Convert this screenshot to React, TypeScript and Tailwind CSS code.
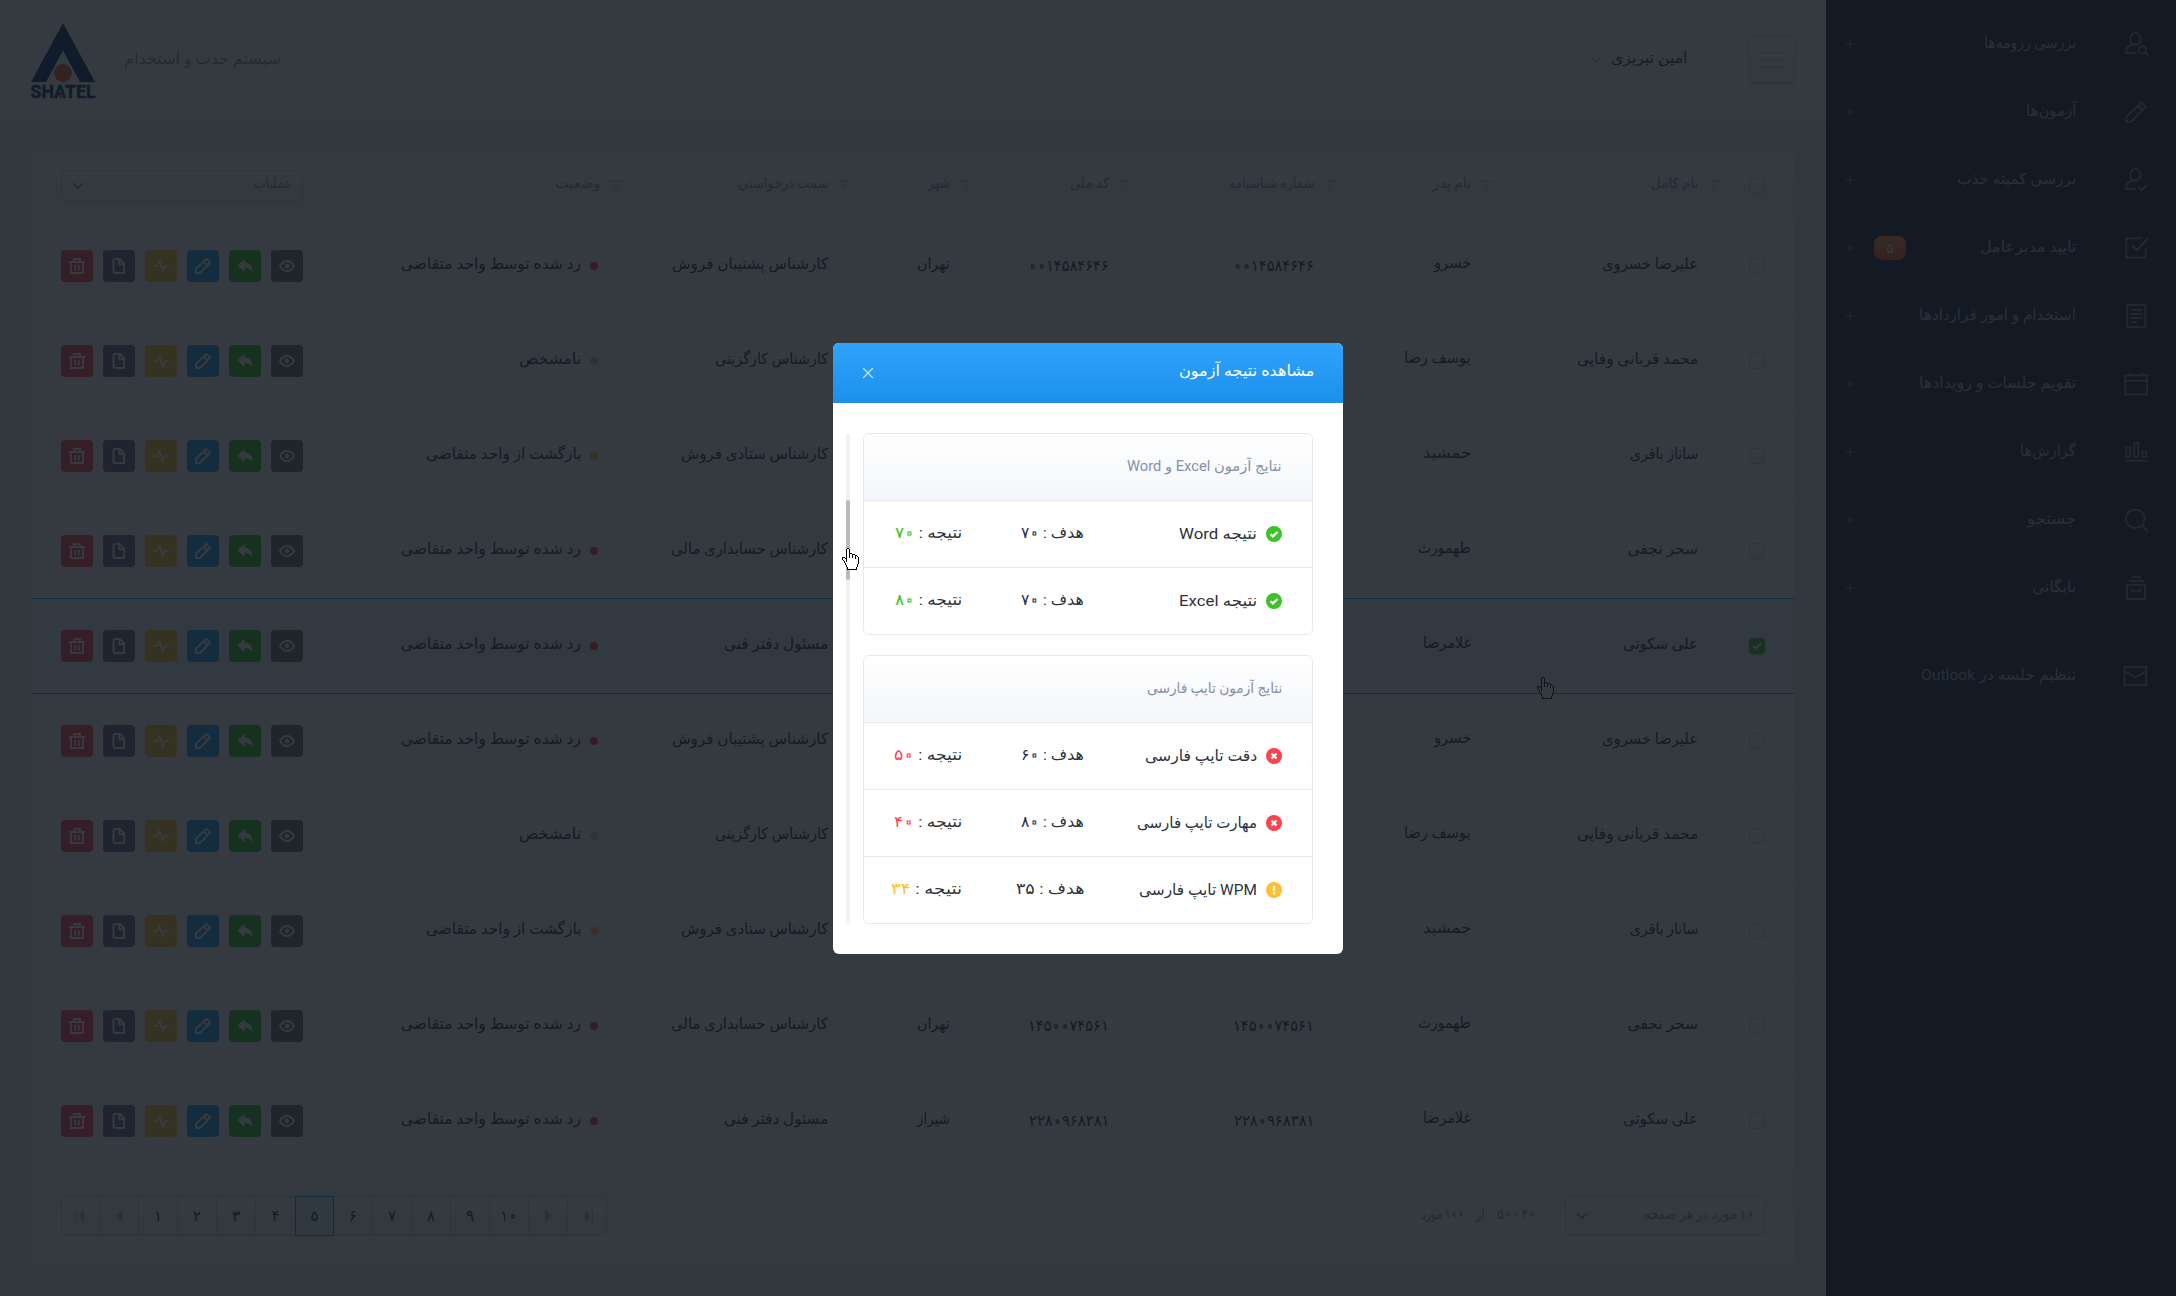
import { useLayoutEffect, useRef, useState, type ReactNode } from "react";

/* Persian text whose zeros are drawn as small open rings. */
function digits(text: string): ReactNode {
  return text.split(/(۰)/).map((part, i) =>
    part === "۰" ? (
      <span
        key={i}
        className="relative top-[0.1em] -mx-[0.07em] text-[1.55em] leading-[0] [-webkit-text-fill-color:transparent] [-webkit-text-stroke:1px_currentColor]"
      >
        ۰
      </span>
    ) : (
      part
    ),
  );
}

/* Single-line label whose glyphs are condensed horizontally to an exact width. */
function Fit({ w, children, className = "" }: { w: number; children: ReactNode; className?: string }) {
  const ref = useRef<HTMLSpanElement>(null);
  const [scale, setScale] = useState(1);
  useLayoutEffect(() => {
    if (ref.current) setScale(w / ref.current.offsetWidth);
  }, [w]);
  return (
    <span dir="rtl" className={`flex shrink-0 justify-start ${className}`} style={{ width: w }}>
      <span
        ref={ref}
        className="block shrink-0 origin-right whitespace-nowrap"
        style={{ transform: `scaleX(${scale})` }}
      >
        {children}
      </span>
    </span>
  );
}

const HAND = [
  ".....##..........",
  "....#oo#.........",
  "....#oo#.........",
  "....#oo#.........",
  "....#oo#.........",
  "....#oo###.......",
  "....#oo#oo###....",
  "....#oo#oo#oo##..",
  "....#oo#oo#oo#o#.",
  "###.#oo#oo#oo#oo#",
  "#oo##oooooooo#oo#",
  "#ooo#ooooooooooo#",
  ".#oo#ooooooooooo#",
  "..#o#ooooooooooo#",
  "..#ooooooooooooo#",
  "...#oooooooooooo#",
  "...#ooooooooooo#.",
  "....#oooooooooo#.",
  "....#oooooooooo#.",
  ".....#oooooooo#..",
  ".....#oooooooo#..",
  ".....##########..",
];

function HandCursor() {
  return (
    <svg width="17" height="22" viewBox="0 0 17 22" shapeRendering="crispEdges">
      {HAND.flatMap((row, y) =>
        row.split("").map((c, x) =>
          c === "." ? null : <rect key={`${x}-${y}`} x={x} y={y} width="1" height="1" fill={c === "#" ? "#000" : "#fff"} />,
        ),
      )}
    </svg>
  );
}

const icons: Record<string, ReactNode> = {
  userSearch: (
    <>
      <ellipse cx="11.3" cy="7" rx="5.2" ry="6" />
      <path d="M13 21H2.3v-2.6c0-3 2.200-4.300 6.200-5.600" />
      <circle cx="18.4" cy="17.8" r="3.6" />
      <path d="M21 20.400l3 3" />
    </>
  ),
  pencil: <path d="M2.3 21.7v-4.9L17.4 2.2l4.4 4.4L7 21.7zM13.8 5.8l4.4 4.4" />,
  userCheck: (
    <>
      <ellipse cx="11.3" cy="7" rx="5.2" ry="6" />
      <path d="M12 21H2.3v-2.6c0-3 2.200-4.300 6.200-5.600M14.500 19.300l3 3 5.600-5.600" />
    </>
  ),
  checkSquare: <path d="M17 2.3H2.3v19.4h19.4V12M8 9.3l5 5L24 2.3" />,
  doc: (
    <>
      <rect x="3.3" y="1" width="18" height="22" rx="1" />
      <path d="M6.5 6h11.8M6.5 10h11.8M6.5 14h11.8M6.5 18H13" />
    </>
  ),
  calendar: <path d="M1.3 3.2h21.6v19.4H1.3zM1.3 8.8h21.6M6.3.3v4.5M18.3.3v4.5" />,
  chart: <path d="M.3 20.8h23.6M2.3 7.8h4v9h-4zM10.3 2.8h4v14h-4zM18.3 11.8h4v5h-4z" />,
  search: (
    <>
      <circle cx="11.3" cy="10.8" r="9.3" />
      <path d="M18 17.6l5.6 5.6" />
    </>
  ),
  archive: <path d="M3 8.8h18v14.2H3zM4.5 5h16M7.5 1h9.5M8.3 12.5v3h8v-3" />,
  mail: <path d="M.3 3h22v18h-22zM.8 7.5l10.5 5.8 10.5-5.8" />,
};

function SideIcon({ name }: { name: string }) {
  return (
    <svg width="24" height="24" viewBox="0 0 24 24" fill="none" stroke="currentColor" strokeWidth="2" className="overflow-visible text-[#7a869a]">
      {icons[name]}
    </svg>
  );
}

const menu: { icon: string; label: string; w: number; badge?: string }[] = [
  { icon: "userSearch", label: "بررسی رزومه‌ها", w: 92 },
  { icon: "pencil", label: "آزمون‌ها", w: 50 },
  { icon: "userCheck", label: "بررسی کمیته جذب", w: 119 },
  { icon: "checkSquare", label: "تایید مدیرعامل", w: 96, badge: "۵" },
  { icon: "doc", label: "استخدام و امور قراردادها", w: 157 },
  { icon: "calendar", label: "تقویم جلسات و رویدادها", w: 157 },
  { icon: "chart", label: "گزارش‌ها", w: 56 },
  { icon: "search", label: "جستجو", w: 49 },
  { icon: "archive", label: "بایگانی", w: 44 },
];

function MenuItem({ icon, label, w, badge, plus = true }: { icon: string; label: string; w: number; badge?: string; plus?: boolean }) {
  return (
    <div className="flex h-[68px] items-center pr-7 pl-5">
      <SideIcon name={icon} />
      <Fit w={w} className="mr-12 -mt-0.5 text-[15.5px] text-[#a9b4c6]">{label}</Fit>
      <div className="grow" />
      {badge && (
        <div className="ml-5 flex h-6 w-8 items-center justify-center rounded-lg bg-linear-to-b from-[#ff9f43] to-[#ff4b2b] text-[14px] text-white">
          {badge}
        </div>
      )}
      {plus && (
        <svg width="8" height="8" viewBox="0 0 8 8" stroke="#6a768a" strokeWidth="1.6">
          <path d="M4 0v8M0 4h8" />
        </svg>
      )}
    </div>
  );
}

function Chevron({ className = "" }: { className?: string }) {
  return (
    <svg width="12" height="8" viewBox="0 0 12 8" fill="none" stroke="currentColor" strokeWidth="2" className={className}>
      <path d="M1 1.200l5 5 5-5" />
    </svg>
  );
}

const actions: { bg: string; icon: ReactNode }[] = [
  {
    bg: "bg-[#75706c]",
    icon: (
      <>
        <path d="M1 8c2-3.400 4.300-5 7-5s5 1.600 7 5c-2 3.400-4.300 5-7 5s-5-1.600-7-5z" />
        <circle cx="8" cy="8" r="1.300" />
      </>
    ),
  },
  { bg: "bg-[#3ac42a]", icon: <path d="M7.600.8v3.800c5 .3 7.700 3.700 8 9.800-1.900-3-4.300-4.300-8-4.300V14L.5 7.500z" fill="currentColor" stroke="none" /> },
  { bg: "bg-[#1e9ff2]", icon: <path d="M1 15v-4.300L11.300.9l3.800 3.800L4.900 15zM8.900 3.700l3.600 3.500" /> },
  { bg: "bg-[#fdc830]", icon: <path d="M0 8h4l2.600-4.800L9.800 13l2-5H16" /> },
  { bg: "bg-[#676d94]", icon: <path d="M3.500 1h5.300l4.400 4.400V15H3.500a1 1 0 0 1-1-1V2a1 1 0 0 1 1-1zM8.300 1.500v4.800h4.500" /> },
  { bg: "bg-[#ff4757]", icon: <path d="M0 4h16M2 4v11h12V4M5 4V1h6v3M6.200 7v5.500M9.800 7v5.500" /> },
];

function Actions() {
  return (
    <div className="flex gap-2.5">
      {actions.map((a, i) => (
        <div key={i} className={`flex size-8 items-center justify-center rounded text-white ${a.bg}`}>
          <svg width="16" height="16" viewBox="0 0 16 16" fill="none" stroke="currentColor" strokeWidth="1.900">
            {a.icon}
          </svg>
        </div>
      ))}
    </div>
  );
}

function Checkbox({ on = false }: { on?: boolean }) {
  return on ? (
    <div className="flex size-4 items-center justify-center rounded bg-[#3ac42a] shadow">
      <svg width="10" height="8" viewBox="0 0 10 8" fill="none" stroke="#fff" strokeWidth="2.200">
        <path d="M1 4l2.700 2.600L9 1.300" />
      </svg>
    </div>
  ) : (
    <div className="size-4 rounded border border-[#c9ced9] bg-linear-to-b from-white to-[#f3f4f8]" />
  );
}

type Cell = [string, number];
const status = {
  red: { dot: "bg-[#ff3b48]", cell: ["رد شده توسط واحد متقاضی", 180] as Cell },
  gray: { dot: "bg-[#c9cdd6]", cell: ["نامشخص", 62] as Cell },
  yellow: { dot: "bg-[#fdc830]", cell: ["بازگشت از واحد متقاضی", 155] as Cell },
};

type Person = { name: Cell; father: Cell; job: Cell; status: keyof typeof status };
const people: Record<string, Person> = {
  a: { name: ["علیرضا خسروی", 96], father: ["خسرو", 37], job: ["کارشناس پشتیبان فروش", 156], status: "red" },
  b: { name: ["محمد قربانی وفایی", 121], father: ["یوسف رضا", 67], job: ["کارشناس کارگزینی", 113], status: "gray" },
  c: { name: ["ساناز باقری", 68], father: ["جمشید", 48], job: ["کارشناس ستادی فروش", 147], status: "yellow" },
  d: { name: ["سحر نجفی", 70], father: ["طهمورث", 53], job: ["کارشناس حسابداری مالی", 157], status: "red" },
  e: { name: ["علی سکوتی", 75], father: ["غلامرضا", 48], job: ["مسئول دفتر فنی", 104], status: "red" },
};

const rows: { who: string; id?: string; city?: string; on?: boolean }[] = [
  { who: "a", id: "۰۰۱۴۵۸۴۶۴۶", city: "تهران" },
  { who: "b" },
  { who: "c" },
  { who: "d" },
  { who: "e", on: true },
  { who: "a" },
  { who: "b" },
  { who: "c" },
  { who: "d", id: "۱۴۵۰۰۷۴۵۶۱", city: "تهران" },
  { who: "e", id: "۲۲۸۰۹۶۸۳۸۱", city: "شیراز" },
];

const GRID = "grid grid-cols-[45px_227px_157px_205px_159px_122px_228px_319px_242px] items-center px-[30px]";

const heads: Cell[] = [
  ["نام کامل", 47],
  ["نام پدر", 38],
  ["شماره شناسنامه", 85],
  ["کد ملی", 39],
  ["شهر", 22],
  ["سمت درخواستی", 90],
  ["وضعیت", 45],
];

function Head({ cell }: { cell: Cell }) {
  return (
    <div className="flex items-center">
      <svg width="12" height="12" viewBox="0 0 12 12" stroke="#d8dbe3" strokeWidth="2">
        <path d="M0 1h12M2.500 5.500h7M4.800 10.500h2.400" />
      </svg>
      <Fit w={cell[1]} className="mr-2.5 -mt-1.5 text-[14px]">{cell[0]}</Fit>
    </div>
  );
}

function Row({ who, id, city, on = false }: { who: string; id?: string; city?: string; on?: boolean }) {
  const p = people[who];
  const s = status[p.status];
  return (
    <div
      className={`${GRID} border-b text-[15.5px] text-[#2b3040] ${
        on ? "-mt-px h-[96px] border-t border-[#1e9ff2] bg-[#e6f5fd]" : "h-[95px] border-[#e9ebf0]"
      }`}
    >
      <Checkbox on={on} />
      <Fit w={p.name[1]} className="-mt-1 mr-[22px]">{p.name[0]}</Fit>
      <Fit w={p.father[1]} className="-mt-1.5 mr-[22px]">{p.father[0]}</Fit>
      <div className="pr-[22px]">{id && <Fit w={81}>{digits(id)}</Fit>}</div>
      <div className="pr-[22px]">{id && <Fit w={81}>{digits(id)}</Fit>}</div>
      <div className="pr-[22px]">{city && <Fit w={33} className="-mt-1">{city}</Fit>}</div>
      <Fit w={p.job[1]} className="-mt-1 mr-[22px]">{p.job[0]}</Fit>
      <div className="flex items-center pr-6">
        <div className={`size-2 rounded-full ${s.dot}`} />
        <Fit w={s.cell[1]} className="-mt-1 mr-[9px]">{s.cell[0]}</Fit>
      </div>
      <Actions />
    </div>
  );
}

const field = "flex items-center rounded border border-[#d3d7e0] bg-linear-to-b from-white to-[#f0f2f6]";

function PageIcon({ d, bar }: { d: string; bar?: number }) {
  return (
    <svg width="10" height="12" viewBox="0 0 10 12" fill="#b4bac8">
      <path d={d} />
      {bar !== undefined && <rect x={bar} y="0" width="1" height="12" />}
    </svg>
  );
}

const pager: ReactNode[] = [
  <PageIcon key="first" d="M8 0v12L2.500 6z" bar={0} />,
  <PageIcon key="prev" d="M8 0v12L2 6z" />,
  "۱", "۲", "۳", "۴", "۵", "۶", "۷", "۸", "۹", "۱۰",
  <PageIcon key="next" d="M2 0v12l6-6z" />,
  <PageIcon key="last" d="M2 0v12l5.500-6z" bar={9} />,
];

function Logo() {
  return (
    <svg width="68" height="80" viewBox="-1 -3 68 80" direction="ltr" className="overflow-visible">
      <path d="M33 0L65 59H50L33 27.500 16 59H1z" fill="#0b3a78" />
      <circle cx="33" cy="50" r="9" fill="#f2602a" />
      <text x="0.500" y="75" textLength="65" lengthAdjust="spacingAndGlyphs" fill="#0b3a78" stroke="#0b3a78" strokeWidth="0.500" className="font-['Roboto'] text-[18px] font-bold">
        SHATEL
      </text>
      <circle cx="31" cy="73" r="2.200" fill="#f2602a" />
    </svg>
  );
}

type Kind = "ok" | "bad" | "warn";
const tone: Record<Kind, { bg: string; text: string; icon: ReactNode }> = {
  ok: { bg: "bg-[#3dc22b]", text: "text-[#3dc22b]", icon: <path d="M4.600 8.200l2.300 2.200 4.500-4.400" /> },
  bad: { bg: "bg-[#ff4250]", text: "text-[#ff4250]", icon: <path d="M5.500 5.500l5 5M10.500 5.500l-5 5" /> },
  warn: { bg: "bg-[#fdc02f]", text: "text-[#fdc02f]", icon: <path d="M8 3.800v5M8 10.300v2" /> },
};

function Result({ kind, label, w, goal, gw, res, rw }: { kind: Kind; label: string; w: number; goal: string; gw: number; res: string; rw: number }) {
  const t = tone[kind];
  return (
    <div className="flex h-[67px] items-center border-t border-[#e6e9ed] pr-[30px] text-[15.5px] text-[#2e323c]">
      <div className={`size-4 rounded-full ${t.bg}`}>
        <svg width="16" height="16" viewBox="0 0 16 16" fill="none" stroke="#fff" strokeWidth="2.200">
          {t.icon}
        </svg>
      </div>
      <div className="mr-[9px] w-[173px]">
        <Fit w={w}>{label}</Fit>
      </div>
      <div className="w-[122px]">
        <Fit w={gw} className="-mt-0.5">هدف : {digits(goal)}</Fit>
      </div>
      <Fit w={rw} className="-mt-0.5">
        نتیجه : <span className={t.text}>{digits(res)}</span>
      </Fit>
    </div>
  );
}

function Panel({ title, w, children }: { title: string; w: number; children: ReactNode }) {
  return (
    <div className="overflow-hidden rounded-md border border-[#e6e9ed]">
      <div className="flex h-[66px] items-center bg-linear-to-b from-white to-[#f4f6fa] pr-[30px] text-[14.5px] text-[#8490a8]">
        <Fit w={w}>{title}</Fit>
      </div>
      {children}
    </div>
  );
}

export default function App() {
  return (
    <div dir="rtl" className="relative flex h-[1296px] w-[2176px] overflow-hidden bg-[#f0f2f7] font-['Roboto','DejaVu_Sans',sans-serif] leading-6">
      <aside className="h-full w-[350px] shrink-0 bg-[#1d2a3c]">
        <div className="border-b border-[#2c394c] pt-2.5 pb-[9px]">
          {menu.map((m) => (
            <MenuItem key={m.label} {...m} />
          ))}
        </div>
        <div className="pt-2.5">
          <MenuItem icon="mail" label="تنظیم جلسه در Outlook" w={155} plus={false} />
        </div>
      </aside>

      <main className="flex grow flex-col">
        <header className="flex h-[121px] items-center border-b border-[#e2e5ec] bg-white px-[30px]">
          <div className={`${field} size-12 flex-col justify-center gap-[5px]`}>
            <span className="h-0.5 w-[25px] bg-[#dde0e7]" />
            <span className="h-0.5 w-[25px] bg-[#dde0e7]" />
            <span className="h-0.5 w-[25px] bg-[#dde0e7]" />
          </div>
          <div className="mr-[30px] h-6 w-px bg-[#eceef2]" />
          <Fit w={76} className="mr-[30px] -mt-1 text-[15.5px] text-[#2b3040]">امین تبریزی</Fit>
          <Chevron className="mr-[9px] text-[#d5d9e2]" />
          <div className="grow" />
          <Fit w={157} className="-mt-0.5 text-[16px] text-[#8d94a6]">سیستم جذب و استخدام</Fit>
          <div className="mr-[27px] -ml-px">
            <Logo />
          </div>
        </header>

        <section className="mx-[30px] mt-[31px] h-[1113px] overflow-hidden rounded-md border border-[#e4e7ee] bg-white">
          <div className={`${GRID} h-[66px] border-b border-[#eceef3] bg-linear-to-b from-white to-[#f1f3f7] text-[#8d94a6]`}>
            <Checkbox />
            {heads.map((h) => (
              <Head key={h[0]} cell={h} />
            ))}
            <div className={`${field} h-8 justify-between px-2.5 text-[14px]`}>
              <Fit w={38} className="-mt-1.5">عملیات</Fit>
              <Chevron className="text-[#9aa1b2]" />
            </div>
          </div>
          {rows.map((r, i) => (
            <Row key={i} {...r} />
          ))}
          <div className="flex h-[94px] items-center bg-linear-to-b from-[#f3f5f9] to-white px-[30px] text-[14px] text-[#8d94a6]">
            <div className={`${field} h-10 w-[200px] justify-between px-2.5`}>
              <Fit w={110} className="-mt-1">{digits("۱۰ مورد در هر صفحه")}</Fit>
              <Chevron className="text-[#9aa1b2]" />
            </div>
            <Fit w={39} className="mr-[29px] -mt-1">{digits("۴۰ - ۵۰")}</Fit>
            <Fit w={9} className="mr-3 -mt-1">از</Fit>
            <Fit w={43} className="mr-3 -mt-1">{digits("۱۰۰ مورد")}</Fit>
            <div className="grow" />
            <div dir="ltr" className={`${field} h-10 w-[546px] text-[15px] text-[#2b3040]`}>
              {pager.map((p, i) => (
                <div
                  key={i}
                  className={`flex h-10 shrink-0 items-center justify-center ${i === 0 ? "w-[38px]" : "w-[39px]"} ${
                    i === 6 ? "border border-[#1e9ff2] bg-[#dceefb]" : i < 13 && i !== 5 ? "border-r border-[#d3d7e0]" : ""
                  }`}
                >
                  {typeof p === "string" ? <span>{digits(p)}</span> : p}
                </div>
              ))}
            </div>
          </div>
        </section>
      </main>

      <div className="absolute top-[677px] left-[1537px]">
        <HandCursor />
      </div>
      <div className="absolute inset-0 bg-[#12171f]/85" />

      <div className="absolute top-[343px] left-[833px] h-[611px] w-[510px] overflow-hidden rounded-md bg-white">
        <div className="flex h-[60px] items-center justify-between bg-linear-to-b from-[#30a2fb] to-[#1a90eb] pr-[29px] pl-[30px] text-white">
          <Fit w={135} className="-mt-1 text-[15.5px]">مشاهده نتیجه آزمون</Fit>
          <svg width="10" height="10" viewBox="0 0 10 10" stroke="#fff" strokeWidth="1.200" opacity="0.850">
            <path d="M0 0l10 10M10 0L0 10" />
          </svg>
        </div>
        <div className="flex gap-[13px] py-[30px] pr-[30px] pl-[13px]">
          <div className="flex w-[450px] flex-col gap-5">
            <Panel title="نتایج آزمون Excel و Word" w={155}>
              <Result kind="ok" label="نتیجه Word" w={78} goal="۷۰" gw={63} res="۷۰" rw={67} />
              <Result kind="ok" label="نتیجه Excel" w={78} goal="۷۰" gw={63} res="۸۰" rw={67} />
            </Panel>
            <Panel title="نتایج آزمون تایپ فارسی" w={135}>
              <Result kind="bad" label="دقت تایپ فارسی" w={112} goal="۶۰" gw={63} res="۵۰" rw={68} />
              <Result kind="bad" label="مهارت تایپ فارسی" w={120} goal="۸۰" gw={63} res="۴۰" rw={68} />
              <Result kind="warn" label="WPM تایپ فارسی" w={118} goal="۳۵" gw={68} res="۳۴" rw={71} />
            </Panel>
          </div>
          <div className="h-[491px] w-1 rounded-full bg-[#f3f3f3] pt-[67px]">
            <div className="h-20 w-1 rounded-full bg-[#bababa]" />
          </div>
        </div>
      </div>

      <div className="absolute top-[548px] left-[842px]">
        <HandCursor />
      </div>
    </div>
  );
}
